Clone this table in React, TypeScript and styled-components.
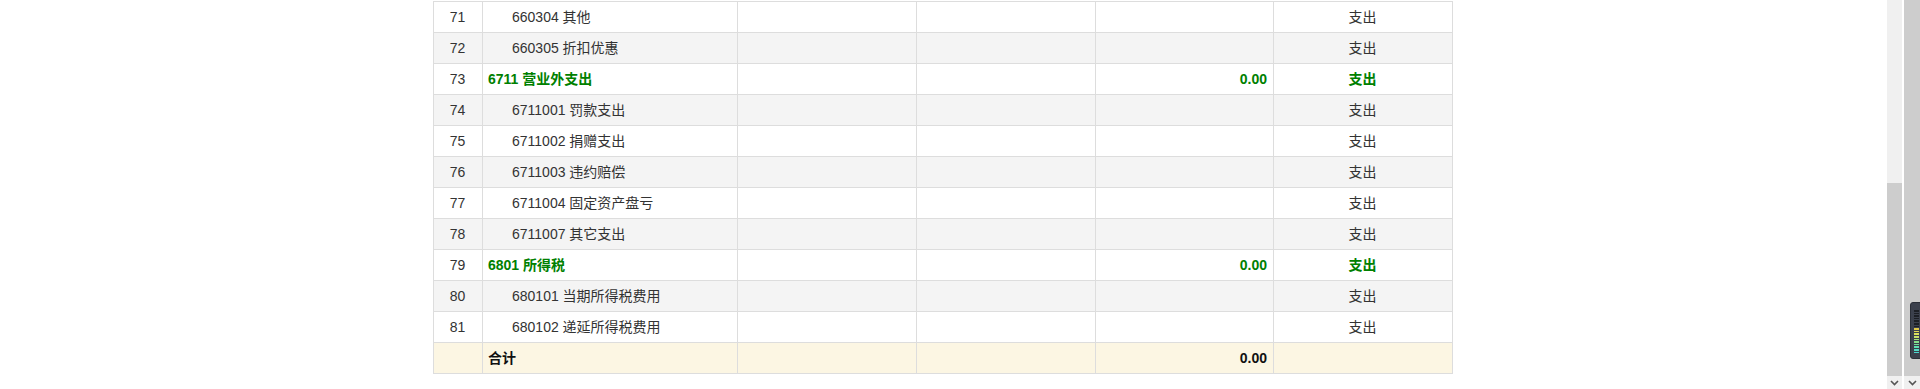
import React from "react";
import styled, { createGlobalStyle } from "styled-components";

const Global = createGlobalStyle`
  html, body { margin: 0; padding: 0; background: #fff; }
  body { font-family: "Liberation Sans", Arial, "Noto Sans CJK SC", sans-serif; font-size: 14px; color: #333; }
`;

const Page = styled.div`
  display: flex;
  height: 389px;
  overflow: hidden;
  position: relative;
`;

const Main = styled.div`
  flex: 1;
  padding: 1px 1px 0 0;
  display: flex;
  justify-content: center;
  align-items: flex-start;
`;

const Grid = styled.div`
  display: grid;
  grid-template-columns: 49px 255px 179px 179px 178px 179px;
  border-top: 1px solid #ddd;
  border-left: 1px solid #ddd;
  width: 1019px;
`;

type Tone = "white" | "gray" | "total";
const bg: Record<Tone, string> = { white: "#fff", gray: "#f4f4f4", total: "#fcf6e3" };

const Cell = styled.div<{ $tone: Tone; $align?: "left" | "center" | "right"; $indent?: boolean; $kind?: "normal" | "green" | "bold" }>`
  height: 30px;
  line-height: 30px;
  border-right: 1px solid #ddd;
  border-bottom: 1px solid #ddd;
  background: ${(p) => bg[p.$tone]};
  text-align: ${(p) => p.$align || "left"};
  padding: 0 6px 0 ${(p) => (p.$indent ? "29px" : "5px")};
  white-space: nowrap;
  overflow: hidden;
  color: ${(p) => (p.$kind === "green" ? "#008000" : p.$kind === "bold" ? "#111" : "#333")};
  font-weight: ${(p) => (p.$kind === "green" || p.$kind === "bold" ? 700 : 400)};
`;

const ScrollBar = styled.div<{ $width: number; $gapLeft: number }>`
  width: ${(p) => p.$width}px;
  margin-left: ${(p) => p.$gapLeft}px;
  display: flex;
  flex-direction: column;
  background: #f0f0f0;
`;

const Track = styled.div`
  flex: 1;
  display: flex;
  flex-direction: column;
`;

const Thumb = styled.div<{ $top: number }>`
  margin-top: ${(p) => p.$top}px;
  flex: 1;
  background: #cdcdcd;
`;

const Arrow = styled.div`
  height: 13px;
  display: flex;
  align-items: center;
  justify-content: center;
  background: #f0f0f0;
`;

const Widget = styled.div`
  position: absolute;
  left: 1910px;
  top: 302px;
  width: 14px;
  height: 57px;
  border-radius: 3px;
  background: #3b404c;
  border: 1px solid #2a2e37;
  box-sizing: border-box;
  display: flex;
  flex-direction: column;
  gap: 1px;
  padding: 7px 0 4px 3px;
`;

const Bar = styled.div<{ $c: string }>`
  width: 5px;
  height: 1.6px;
  background: ${(p) => p.$c};
`;

type Row = { n: string; name: string; kind: "child" | "group" | "total"; amount?: string; dir?: string };

const rows: Row[] = [
  { n: "71", name: "660304 其他", kind: "child", dir: "支出" },
  { n: "72", name: "660305 折扣优惠", kind: "child", dir: "支出" },
  { n: "73", name: "6711 营业外支出", kind: "group", amount: "0.00", dir: "支出" },
  { n: "74", name: "6711001 罚款支出", kind: "child", dir: "支出" },
  { n: "75", name: "6711002 捐赠支出", kind: "child", dir: "支出" },
  { n: "76", name: "6711003 违约赔偿", kind: "child", dir: "支出" },
  { n: "77", name: "6711004 固定资产盘亏", kind: "child", dir: "支出" },
  { n: "78", name: "6711007 其它支出", kind: "child", dir: "支出" },
  { n: "79", name: "6801 所得税", kind: "group", amount: "0.00", dir: "支出" },
  { n: "80", name: "680101 当期所得税费用", kind: "child", dir: "支出" },
  { n: "81", name: "680102 递延所得税费用", kind: "child", dir: "支出" },
  { n: "", name: "合计", kind: "total", amount: "0.00", dir: "" },
];

const Chevron = () => (
  <svg width="9" height="6" viewBox="0 0 9 6">
    <path d="M1 1 L4.5 4.5 L8 1" stroke="#555" strokeWidth="1.6" fill="none" />
  </svg>
);

const barColors = [
  "#1c1f25", "#1c1f25", "#1c1f25", "#1c1f25", "#1c1f25", "#1c1f25", "#1c1f25",
  "#e0c84a", "#e2d552", "#dbe05a", "#c8e06a", "#a6e07a", "#86e08a", "#6ee09a", "#5ee0b0", "#52dcc4", "#4cd6d0",
];

export default function App() {
  return (
    <>
      <Global />
      <Page>
        <Main>
          <Grid>
            {rows.map((r, i) => {
              const tone: Tone = r.kind === "total" ? "total" : i % 2 === 0 ? "white" : "gray";
              const kind = r.kind === "group" ? "green" : r.kind === "total" ? "bold" : "normal";
              return (
                <React.Fragment key={i}>
                  <Cell $tone={tone} $align="center">{r.n}</Cell>
                  <Cell $tone={tone} $indent={r.kind === "child"} $kind={kind}>{r.name}</Cell>
                  <Cell $tone={tone} />
                  <Cell $tone={tone} />
                  <Cell $tone={tone} $align="right" $kind={kind}>{r.amount}</Cell>
                  <Cell $tone={tone} $align="center" $kind={r.kind === "group" ? "green" : "normal"}>{r.dir}</Cell>
                </React.Fragment>
              );
            })}
          </Grid>
        </Main>
        <ScrollBar $width={15} $gapLeft={0}>
          <Track>
            <Thumb $top={183} />
          </Track>
          <Arrow><Chevron /></Arrow>
        </ScrollBar>
        <ScrollBar $width={16} $gapLeft={2}>
          <Track>
            <Thumb $top={0} />
          </Track>
          <Arrow><Chevron /></Arrow>
        </ScrollBar>
        <Widget>
          {barColors.map((c, i) => (
            <Bar key={i} $c={c} />
          ))}
        </Widget>
      </Page>
    </>
  );
}
